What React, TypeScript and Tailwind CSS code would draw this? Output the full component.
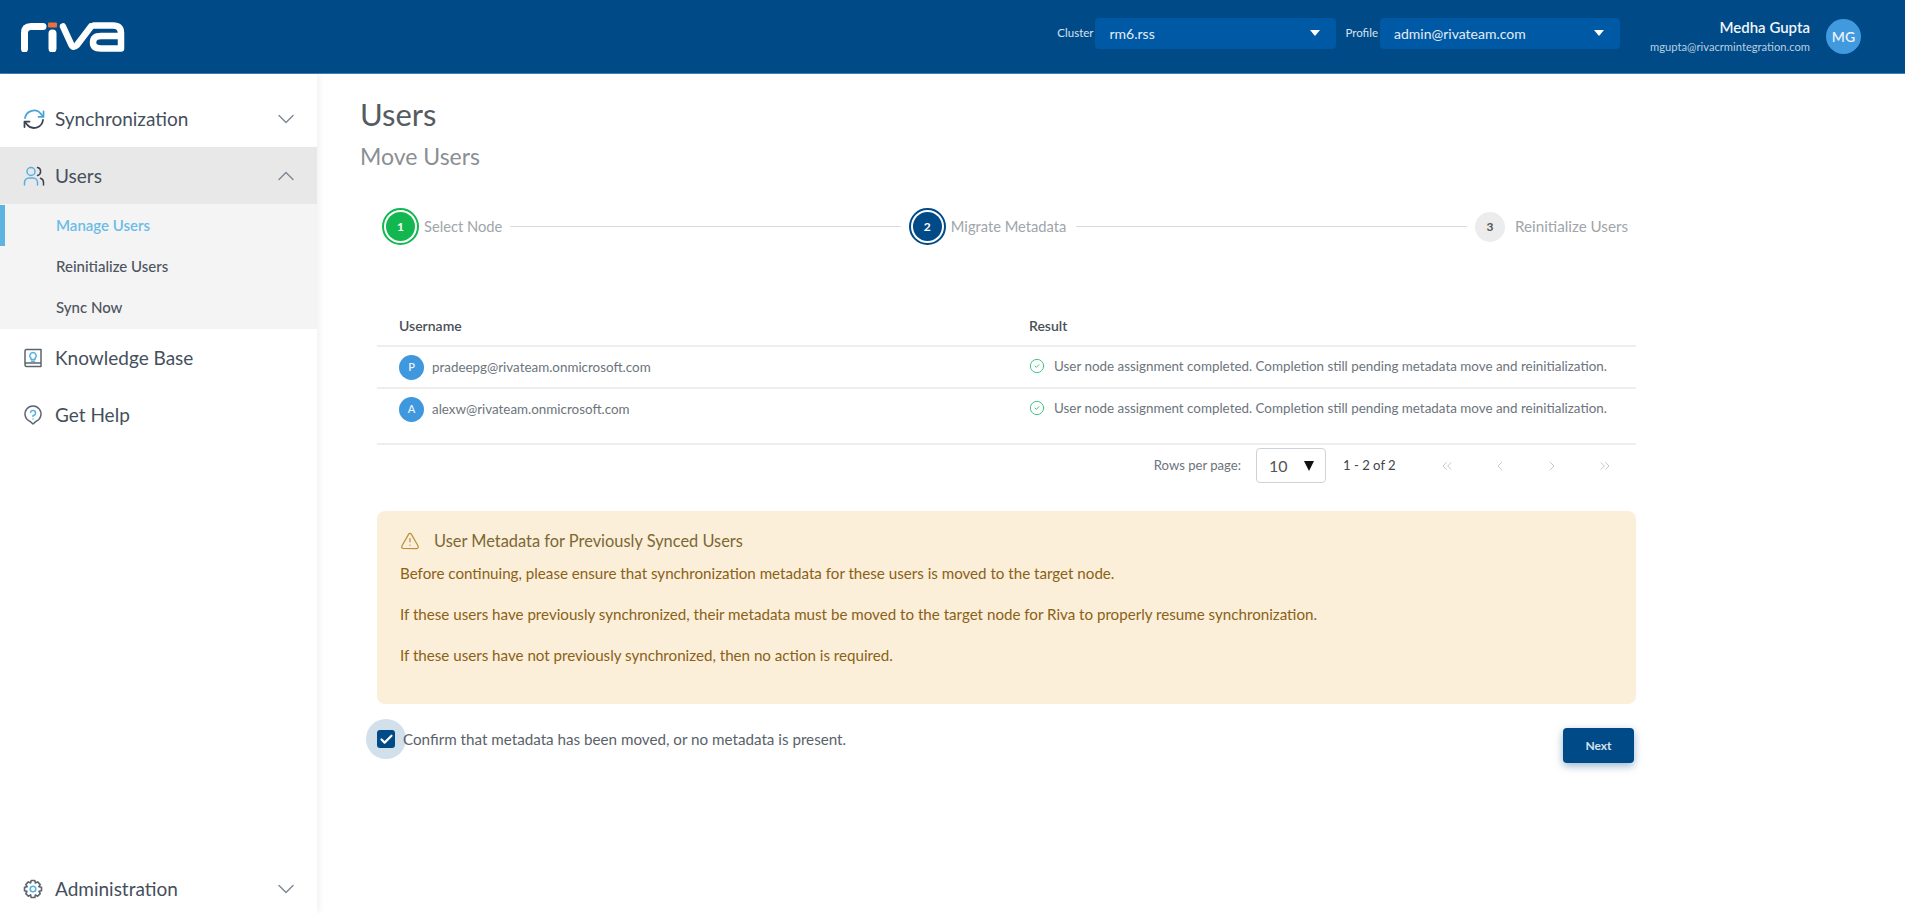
import { ChevronDown, ChevronLeft, ChevronRight, ChevronUp, ChevronsLeft, ChevronsRight, CircleCheck, TriangleAlert, Check } from 'lucide-react'

function Logo() {
  return (
    <svg width="104" height="30" viewBox="0 0 104 30" fill="none" className="block">
      <path d="M3.5 27V11Q3.5 4.5 10 4.5H22" stroke="#fff" strokeWidth="7" strokeLinecap="round" />
      <rect x="27" y="0.5" width="9" height="5" rx="1" fill="#e8743b" />
      <path d="M31.5 11.5V26.5" stroke="#fff" strokeWidth="8" strokeLinecap="round" />
      <path d="M42 4.5L50 22Q52 27 56 23L70 4.5" stroke="#fff" strokeWidth="6.5" strokeLinecap="round" strokeLinejoin="round" />
      <path d="M73 3.5H92Q100 3.5 100 11V26.5H80Q72 26.5 72 20.5Q72 14 80 14H98" stroke="#fff" strokeWidth="6.5" strokeLinecap="round" strokeLinejoin="round" />
    </svg>
  )
}

function SyncIcon() {
  return (
    <svg width="22" height="22" viewBox="0 0 22 22" fill="none" strokeWidth="1.8" strokeLinecap="round" strokeLinejoin="round">
      <path d="M2 10A9 9 0 0 1 18 6L20 8.5" stroke="#4aa3d8" />
      <path d="M20.5 3.5V8.8H15.5" stroke="#4aa3d8" />
      <path d="M20 12A9 9 0 0 1 4 16.5L2 14" stroke="#3b4450" />
      <path d="M1.5 19V13.6H6.5" stroke="#3b4450" />
    </svg>
  )
}

function UsersIcon() {
  return (
    <svg width="22" height="22" viewBox="0 0 22 22" fill="none" strokeWidth="1.5" strokeLinecap="round">
      <circle cx="8" cy="6.5" r="4" stroke="#58b0e0" />
      <path d="M1.5 20V17.5A4.5 4.5 0 0 1 6 13H10A4.5 4.5 0 0 1 14.5 17.5V20" stroke="#58b0e0" />
      <path d="M14.5 2.6A4 4 0 0 1 14.5 10.4" stroke="#3b4450" />
      <path d="M17.5 13.3A4.5 4.5 0 0 1 20.5 17.5V20" stroke="#3b4450" />
    </svg>
  )
}

function BookIcon() {
  return (
    <svg width="20" height="20" viewBox="0 0 20 20" fill="none" strokeWidth="1.5" strokeLinecap="round" strokeLinejoin="round">
      <path d="M2 16V3Q2 1.5 3.5 1.5H18V15H3.5Q2 15 2 16.5Q2 18.5 3.5 18.5H18V15" stroke="#5b6570" />
      <path d="M10 4.5A3.2 3.2 0 0 1 12 10.2V11.5H8V10.2A3.2 3.2 0 0 1 10 4.5Z" stroke="#58b0e0" />
      <path d="M8.5 13.2H11.5" stroke="#58b0e0" />
    </svg>
  )
}

function HelpIcon() {
  return (
    <svg width="20" height="20" viewBox="0 0 20 20" fill="none" strokeWidth="1.5" strokeLinecap="round" strokeLinejoin="round">
      <path d="M10 19L7 16.4A8 8 0 1 1 13 16.4Z" stroke="#5b6570" />
      <path d="M7.6 7.4A2.5 2.5 0 1 1 10 10.5V11.5" stroke="#58b0e0" />
      <path d="M10 13.9V14" stroke="#58b0e0" />
    </svg>
  )
}

function GearIcon() {
  return (
    <svg width="20" height="20" viewBox="0 0 20 20" fill="none" strokeWidth="1.6" strokeLinejoin="round">
      <path d="M8.2 1.5H11.8L12.4 4L14.7 2.9L17.2 5.6L15.8 7.7L18.5 8.3V11.8L16 12.4L17.2 14.6L14.6 17.2L12.4 15.9L11.8 18.5H8.2L7.6 15.9L5.4 17.2L2.8 14.6L4 12.4L1.5 11.8V8.3L4.2 7.7L2.8 5.6L5.3 2.9L7.6 4Z" stroke="#5b6570" />
      <circle cx="10" cy="10" r="2.8" stroke="#58b0e0" />
    </svg>
  )
}

function NavRow({ icon, label, open, active }: { icon: React.ReactNode; label: string; open?: boolean; active?: boolean }) {
  return (
    <div className={`flex h-[57px] items-center pl-[23px] pr-[17px] ${active ? 'bg-[#e8e8e8]' : ''}`}>
      <span className="flex w-[32px] shrink-0 items-center">{icon}</span>
      <span className="flex-1 pt-[1px] text-[19px] text-[#454f5b]">{label}</span>
      {open === true && <ChevronUp size={28} strokeWidth={1.2} className="text-[#7b8794]" />}
      {open === false && <ChevronDown size={28} strokeWidth={1.2} className="text-[#7b8794]" />}
    </div>
  )
}

function Step({ n, label, state }: { n: number; label: string; state: 'done' | 'current' | 'todo' }) {
  return (
    <div className="flex shrink-0 items-center">
      {state === 'todo' ? (
        <div className="flex size-[30px] items-center justify-center rounded-full bg-[#ececec] text-[12px] font-bold text-[#555]">{n}</div>
      ) : (
        <div className={`flex size-[37px] items-center justify-center rounded-full border-2 ${state === 'done' ? 'border-[#12b84f]' : 'border-[#004a87]'}`}>
          <div className={`flex size-[29px] items-center justify-center rounded-full text-[12px] font-bold text-white ${state === 'done' ? 'bg-[#12b84f]' : 'bg-[#004a87]'}`}>{n}</div>
        </div>
      )}
      <span className={state === 'todo' ? 'ml-[10px] text-[15.2px] text-[#a0a5aa]' : 'ml-[5px] text-[14.7px] text-[#a0a5aa]'}>{label}</span>
    </div>
  )
}

function UserRow({ letter, email, tall }: { letter: string; email: string; tall?: boolean }) {
  return (
    <div className={`grid grid-cols-[652px_1fr] items-start ${tall ? 'h-[54px]' : 'h-[42px] border-b-2 border-[#eeeeee]'}`}>
      <div className="flex h-[40px] items-center pl-[22px]">
        <div className="flex size-[25px] items-center justify-center rounded-full bg-[#3f97dd] text-[11px] font-semibold text-[#e8f2fb]">{letter}</div>
        <span className="ml-[8px] text-[13.4px] text-[#6c747c]">{email}</span>
      </div>
      <div className="flex h-[38px] items-center">
        <CircleCheck size={16} strokeWidth={1.5} className="text-[#45c486]" />
        <span className="ml-[9px] text-[13.4px] text-[#6c747c]">User node assignment completed. Completion still pending metadata move and reinitialization.</span>
      </div>
    </div>
  )
}

export default function App() {
  return (
    <div className="flex h-screen flex-col overflow-hidden bg-white font-['Lato','Noto_Sans',sans-serif]">
      <header className="flex h-[74px] shrink-0 items-center border-b border-[#3f7fb5] bg-[#004a87] pl-[21px] pr-[44px]">
        <Logo />
        <div className="ml-auto flex items-center text-white">
          <div className="mb-[7px] flex items-center">
            <span className="mr-[2px] text-[11.5px] text-[#d5e3ef]">Cluster</span>
            <div className="flex h-[31px] w-[241px] items-center justify-between rounded-[4px] bg-[#0059a4] pl-[14px] pr-[16px] text-[14px] text-[#e3edf6]">
              rm6.rss
              <svg width="10" height="6" viewBox="0 0 10 6"><path d="M0 0H10L5 6Z" fill="#fff" /></svg>
            </div>
            <span className="ml-[9px] mr-[2px] text-[11.5px] text-[#d5e3ef]">Profile</span>
            <div className="flex h-[31px] w-[240px] items-center justify-between rounded-[4px] bg-[#0059a4] pl-[14px] pr-[16px] text-[14px] text-[#e3edf6]">
              admin@rivateam.com
              <svg width="10" height="6" viewBox="0 0 10 6"><path d="M0 0H10L5 6Z" fill="#fff" /></svg>
            </div>
          </div>
          <div className="ml-[21px] w-[169px] text-right">
            <div className="text-[15px] font-semibold leading-[18px] text-[#f0f5fa]">Medha Gupta</div>
            <div className="mt-[3px] text-[11.2px] leading-[16px] text-[#b9cfe2]">mgupta@rivacrmintegration.com</div>
          </div>
          <div className="ml-[16px] flex size-[35px] items-center justify-center rounded-full bg-[#4199de] text-[14px] font-semibold text-[#e8f2fb]">MG</div>
        </div>
      </header>

      <div className="flex min-h-0 flex-1">
        <aside className="flex w-[317px] shrink-0 flex-col justify-between shadow-[3px_0_6px_rgba(0,0,0,0.05)]">
          <nav className="pt-[16px]">
            <NavRow icon={<SyncIcon />} label="Synchronization" open={false} />
            <NavRow icon={<UsersIcon />} label="Users" open active />
            <div className="h-[125px] bg-[#f4f4f4] pt-[1px] text-[15px]">
              <div className="flex h-[41px] items-center border-l-[5px] border-[#5eb4e0] pl-[51px] font-semibold text-[#6cbce6]">Manage Users</div>
              <div className="flex h-[41px] items-center pl-[56px] font-medium text-[#4d5560]">Reinitialize Users</div>
              <div className="flex h-[41px] items-center pl-[56px] font-medium text-[#4d5560]">Sync Now</div>
            </div>
            <NavRow icon={<BookIcon />} label="Knowledge Base" />
            <NavRow icon={<HelpIcon />} label="Get Help" />
          </nav>
          <div className="-mb-[4px]">
            <NavRow icon={<GearIcon />} label="Administration" open={false} />
          </div>
        </aside>

        <main className="min-w-0 flex-1 pl-[43px] pt-[20px]">
          <h1 className="text-[31px] leading-[40px] text-[#555b61]">Users</h1>
          <h2 className="mt-[6px] text-[23px] leading-[32px] text-[#8a8f94]">Move Users</h2>

          <div className="ml-[17px] w-[1259px]">
            <div className="mt-[36px] flex items-center pl-[5px] pr-[8px]">
              <Step n={1} label="Select Node" state="done" />
              <div className="mx-[8px] h-px flex-1 bg-[#dcdcdc]" />
              <Step n={2} label="Migrate Metadata" state="current" />
              <div className="ml-[10px] mr-[8px] h-px flex-1 bg-[#dcdcdc]" />
              <Step n={3} label="Reinitialize Users" state="todo" />
            </div>

            <div className="mt-[60px] grid h-[42px] grid-cols-[652px_1fr] items-center border-b-2 border-[#eeeeee] text-[14px] font-semibold text-[#4a5058]">
              <span className="pl-[22px]">Username</span>
              <span>Result</span>
            </div>
            <UserRow letter="P" email="pradeepg@rivateam.onmicrosoft.com" />
            <UserRow letter="A" email="alexw@rivateam.onmicrosoft.com" tall />

            <div className="flex h-[40px] items-end justify-end border-t-2 border-[#eeeeee] pr-[5px]">
              <div className="flex h-[35px] items-center whitespace-nowrap text-[13.1px] text-[#6c747c]">
                Rows per page:
                <div className="ml-[15px] flex h-[35px] w-[70px] items-center justify-between rounded-[4px] border border-[#cfd3d7] pl-[12px] pr-[11px] text-[16px] text-[#555]">
                  10
                  <svg width="10" height="10" viewBox="0 0 10 10"><path d="M0 0H10L5 10Z" fill="#111" /></svg>
                </div>
                <span className="ml-[17px] w-[49px] text-[#3f454c]">1 - 2 of 2</span>
                <div className="ml-[29px] flex text-[#c3c8cd]">
                  <span className="flex w-[52.5px] justify-center"><ChevronsLeft size={16} strokeWidth={1.5} /></span>
                  <span className="flex w-[52.5px] justify-center"><ChevronLeft size={16} strokeWidth={1.5} /></span>
                  <span className="flex w-[52.5px] justify-center"><ChevronRight size={16} strokeWidth={1.5} /></span>
                  <span className="flex w-[52.5px] justify-center"><ChevronsRight size={16} strokeWidth={1.5} /></span>
                </div>
              </div>
            </div>

            <div className="mt-[28px] rounded-[8px] bg-[#fbefda] pb-[39px] pl-[23px] pr-[23px] pt-[20px] text-[15.15px] leading-[20px] text-[#8a6116]">
              <div className="flex h-[20px] items-center text-[16.4px] text-[#7d6733]">
                <TriangleAlert size={20} strokeWidth={1.5} className="text-[#b8933f]" />
                <span className="ml-[14px]">User Metadata for Previously Synced Users</span>
              </div>
              <p className="mt-[12px]">Before continuing, please ensure that synchronization metadata for these users is moved to the target node.</p>
              <p className="mt-[21px]">If these users have previously synchronized, their metadata must be moved to the target node for Riva to properly resume synchronization.</p>
              <p className="mt-[21px]">If these users have not previously synchronized, then no action is required.</p>
            </div>

            <div className="mt-[15px] flex items-start justify-between pr-[2px]">
              <label className="flex h-[40px] items-center text-[15.2px] text-[#5a6269]">
                <span className="relative flex size-[18px] items-center justify-center rounded-[3px] bg-[#004a87]">
                  <span className="absolute -left-[11px] -top-[11px] size-[40px] rounded-full bg-[#d2e0ec]" />
                  <span className="absolute inset-0 flex items-center justify-center rounded-[3px] bg-[#004a87]">
                    <Check size={15} strokeWidth={3.5} className="text-white" />
                  </span>
                </span>
                <span className="relative ml-[8px]">Confirm that metadata has been moved, or no metadata is present.</span>
              </label>
              <button className="mt-[9px] h-[35px] w-[71px] rounded-[4px] bg-[#004a87] text-[12px] font-bold text-[#d5e3ef] shadow-[0_3px_8px_rgba(0,74,135,0.4)]">Next</button>
            </div>
          </div>
        </main>
      </div>
    </div>
  )
}
